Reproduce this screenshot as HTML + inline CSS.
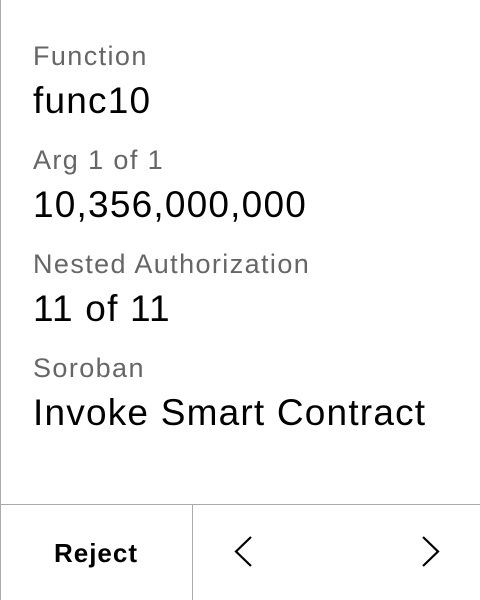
<!DOCTYPE html>
<html><head><style>
body{margin:0;width:480px;height:600px;background:#fff;position:relative;overflow:hidden;font-family:"Liberation Sans",sans-serif;}
.l{position:absolute;left:33px;font-size:27px;line-height:1;color:#666;letter-spacing:1.4px;}
.v{position:absolute;left:33px;font-size:37px;line-height:1;color:#000;letter-spacing:1.2px;}
</style></head><body>
<div style="position:absolute;left:0;top:0;width:1px;height:600px;background:#aaa"></div>
<div class="l" style="top:43px">Function</div>
<div class="v" style="top:82px">func10</div>
<div class="l" style="top:147px">Arg 1 of 1</div>
<div class="v" style="top:186px">10,356,000,000</div>
<div class="l" style="top:251px">Nested Authorization</div>
<div class="v" style="top:290px">11 of 11</div>
<div class="l" style="top:355px">Soroban</div>
<div class="v" style="top:394px">Invoke Smart Contract</div>
<div style="position:absolute;left:0;top:504px;width:480px;height:1px;background:#aaa"></div>
<div style="position:absolute;left:192px;top:504px;width:1px;height:96px;background:#aaa"></div>
<div style="position:absolute;left:0;top:540px;width:192px;text-align:center;font-size:26px;font-weight:bold;line-height:1;letter-spacing:1px">Reject</div>
<svg style="position:absolute;left:0;top:0" width="480" height="600">
<path d="M251 537 L236 551.5 L251 566" fill="none" stroke="#000" stroke-width="2.2"/>
<path d="M423 537 L438 551.5 L423 566" fill="none" stroke="#000" stroke-width="2.2"/>
</svg>
</body></html>
